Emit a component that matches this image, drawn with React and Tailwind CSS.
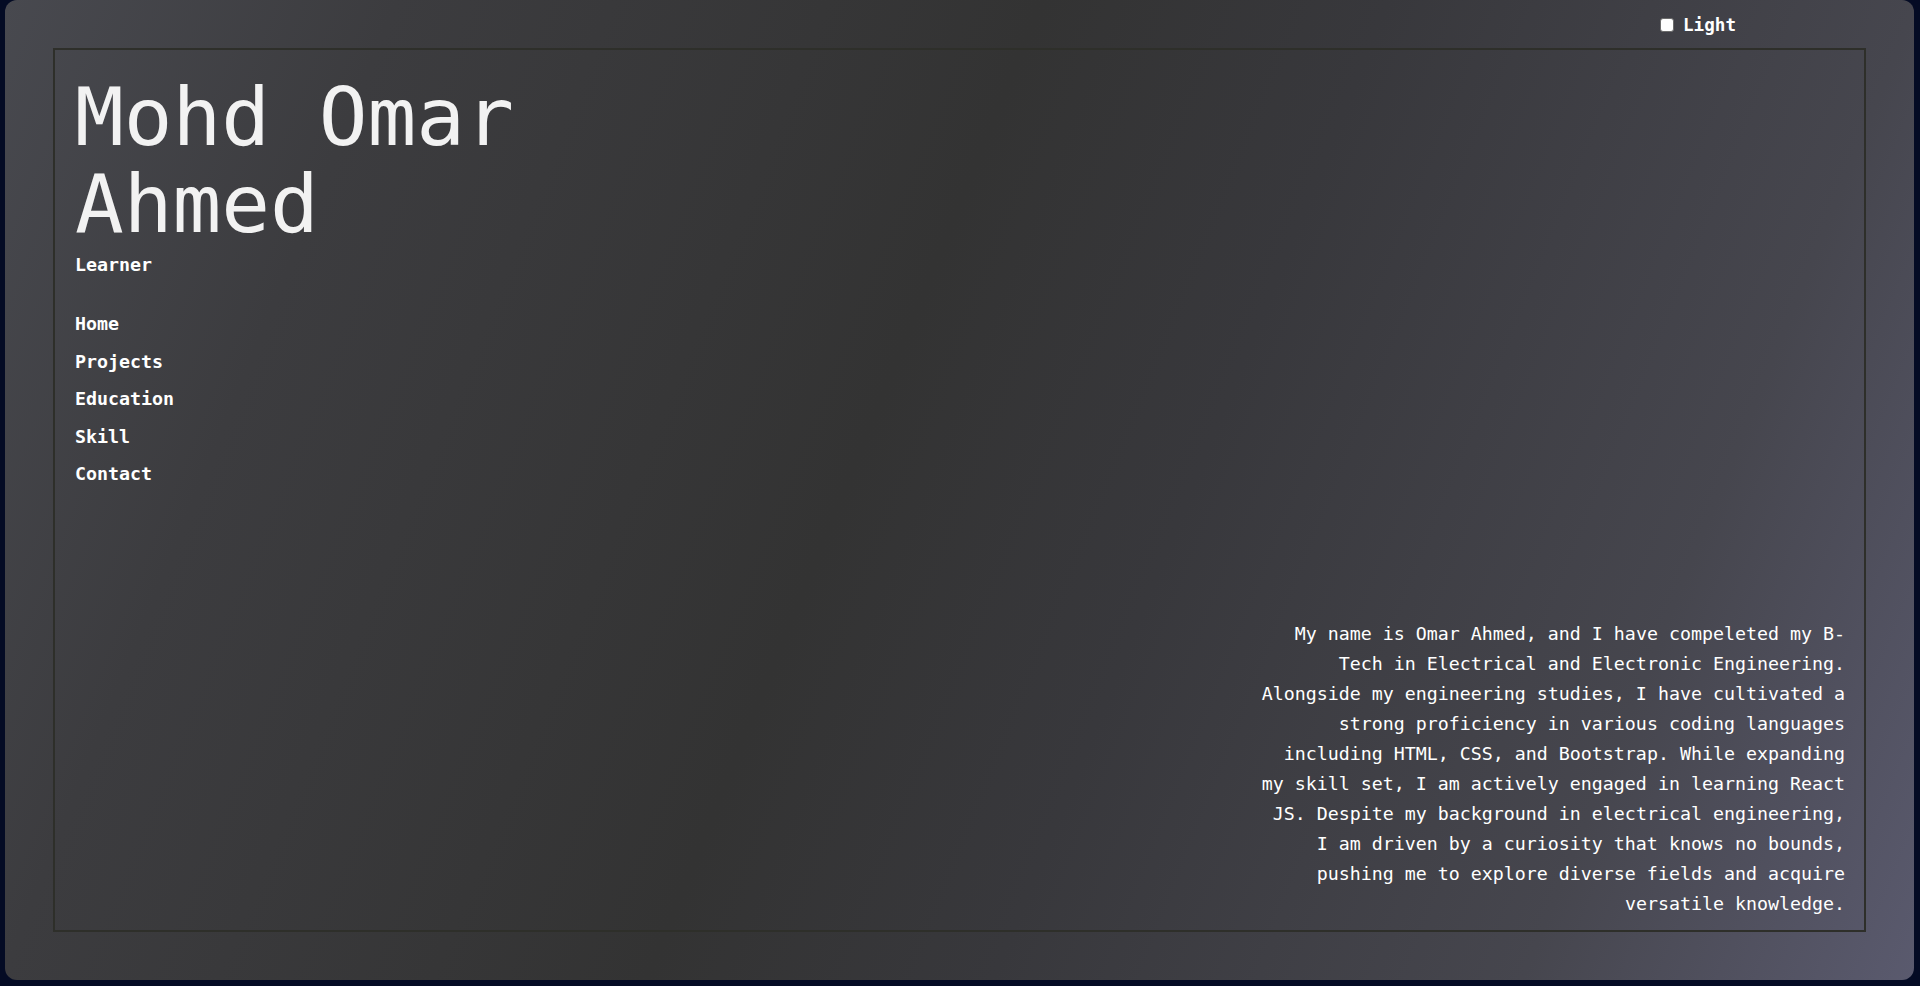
export default function App() {
  const nav = ["Home", "Projects", "Education", "Skill", "Contact"];
  return (
    <div className="min-h-screen w-full bg-[#040b24] pl-[5px] pr-[6px] pb-[6px] font-['DejaVu_Sans_Mono',monospace]">
      <div className="relative h-[980px] rounded-[12px] p-12 bg-[linear-gradient(112deg,#48494f_0%,#3c3c3f_17%,#333333_45%,#38383c_60%,#46464e_83%,#5a5a6e_100%)]">
        <label className="absolute top-[13px] right-[178px] flex items-center gap-[9px] text-[17.6px] font-bold text-white leading-[24px]">
          <span className="block w-[14px] h-[14px] rounded-[3px] bg-white border border-[#6b6b6b]" />
          <span>Light</span>
        </label>
        <div className="h-full border-2 border-[#2e2f2a] flex justify-between">
          <div className="pl-[20px] pt-[24px]">
            <h1 className="text-[81px] leading-[87px] font-normal text-[#f2f2f2] whitespace-pre-line">
              {"Mohd Omar\nAhmed"}
            </h1>
            <div className="mt-[2px] text-[18.3px] leading-[30px] font-bold text-white">Learner</div>
            <ul className="mt-[25px] text-[18.3px] leading-[37.5px] font-bold text-white">
              {nav.map((n) => (
                <li key={n}>{n}</li>
              ))}
            </ul>
          </div>
          <p className="self-end w-[589px] mr-[19px] mb-[11px] text-right text-[18.3px] leading-[30px] text-white">
            My name is Omar Ahmed, and I have compeleted my B-Tech in Electrical and Electronic Engineering. Alongside my engineering studies, I have cultivated a strong proficiency in various coding languages including HTML, CSS, and Bootstrap. While expanding my skill set, I am actively engaged in learning React JS. Despite my background in electrical engineering, I am driven by a curiosity that knows no bounds, pushing me to explore diverse fields and acquire versatile knowledge.
          </p>
        </div>
      </div>
    </div>
  );
}
